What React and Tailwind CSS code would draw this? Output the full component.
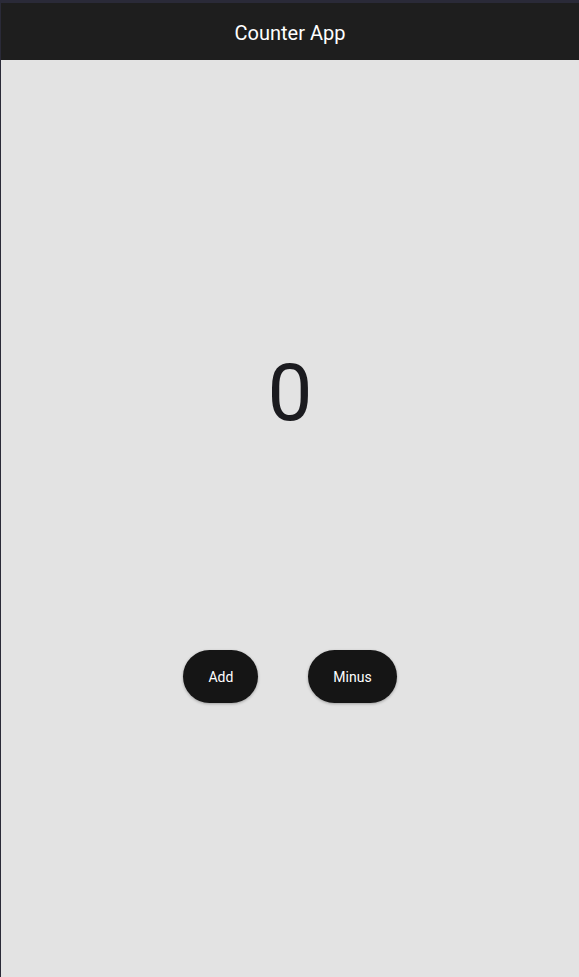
export default function App() {
  return (
    <div
      className="w-[579px] h-[977px] flex flex-col bg-[#2a2a38] pt-[3px] pl-[1px]"
      style={{ fontFamily: "Roboto, 'Liberation Sans', sans-serif" }}
    >
      <div className="h-[57px] shrink-0 bg-[#1e1e1e] flex items-center justify-center pt-[2px]">
        <span className="text-white text-[20px] leading-none">Counter App</span>
      </div>
      <div className="flex-1 bg-[#e3e3e3] flex flex-col items-center">
        <div className="mt-[293px] text-[80px] leading-[80px] text-[#1b1b1f]">0</div>
        <div className="mt-[217px] flex gap-[50px]">
          <button className="h-[53px] px-[25px] pt-[2px] rounded-full bg-[#151515] text-white text-[14px] font-normal shadow-[0_1px_3px_rgba(0,0,0,0.3)]">
            Add
          </button>
          <button className="h-[53px] px-[25px] pt-[2px] rounded-full bg-[#151515] text-white text-[14px] font-normal shadow-[0_1px_3px_rgba(0,0,0,0.3)]">
            Minus
          </button>
        </div>
      </div>
    </div>
  );
}
